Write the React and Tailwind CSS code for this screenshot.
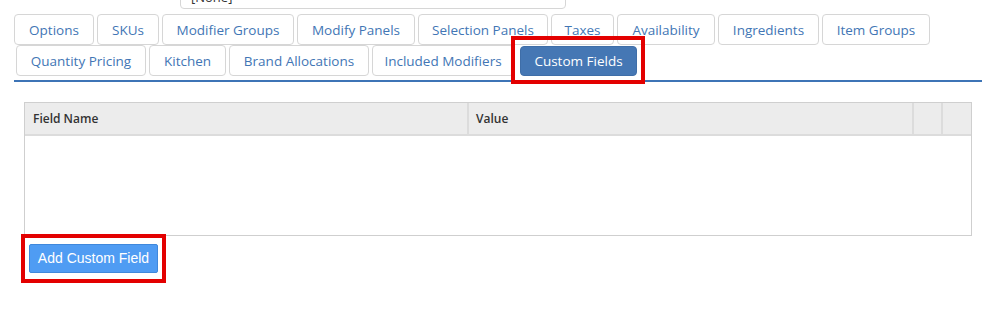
const row1 = [
  { label: 'Options', w: 'w-[80px]' },
  { label: 'SKUs', w: 'w-[62px]' },
  { label: 'Modifier Groups', w: 'w-[132px]' },
  { label: 'Modify Panels', w: 'w-[118px]' },
  { label: 'Selection Panels', w: 'w-[130px]' },
  { label: 'Taxes', w: 'w-[63px]' },
  { label: 'Availability', w: 'w-[98px]' },
  { label: 'Ingredients', w: 'w-[101px]' },
  { label: 'Item Groups', w: 'w-[108px]' },
];

const row2 = [
  { label: 'Quantity Pricing', w: 'w-[130px]' },
  { label: 'Kitchen', w: 'w-[77px]' },
  { label: 'Brand Allocations', w: 'w-[140px]' },
  { label: 'Included Modifiers', w: 'w-[142px]' },
];

const Tab = ({ label, w }) => (
  <div className={`${w} h-[31px] shrink-0 rounded-[4px] border border-[#d6d6d6] bg-white flex items-center justify-center pt-px text-[13.5px] text-[#4276b5]`}>
    {label}
  </div>
);

export default function App() {
  return (
    <div className="w-[994px] h-[310px] bg-white overflow-hidden font-['Open_Sans',sans-serif]">
      {/* cut-off select above */}
      <div className="ml-[180px] w-[386px] h-[9px] overflow-hidden">
        <div className="-mt-[14px] h-[23px] rounded-[4px] border border-[#d6d6d6] pl-[10px] text-[13px] leading-[21px] text-[#333]">[None]</div>
      </div>

      <div className="pl-[14px] pt-[5px]">
        <div className="flex gap-[3px]">
          {row1.map((t) => <Tab key={t.label} {...t} />)}
        </div>
        <div className="flex gap-[3px] ml-[2px] items-start">
          {row2.map((t) => <Tab key={t.label} {...t} />)}
          <div className="relative ml-[3px] mt-px">
            <div className="w-[117px] h-[30px] rounded-[4px] bg-[#4577b4] border border-[#3f6ea8] flex items-center justify-center text-[13.5px] text-white">
              Custom Fields
            </div>
            <div className="absolute z-10 -left-[9px] -top-[10px] w-[134px] h-[48px] border-4 border-[#e30000]" />
          </div>
        </div>
        <div className="mt-[4px] w-[968px] h-[2px] bg-[#3d74b6]" />

        <div className="ml-[10px] mt-[20px] w-[948px] h-[134px] border border-[#cfcfcf]">
          <div className="flex h-[33px] bg-[#ececec] border-b-2 border-[#dcdcdc] text-[12px] font-semibold text-[#333]">
            <div className="w-[444px] border-r-2 border-[#dcdcdc] pl-[8px] flex items-center">Field Name</div>
            <div className="w-[445px] border-r-2 border-[#dcdcdc] pl-[7px] flex items-center">Value</div>
            <div className="w-[29px] border-r-2 border-[#dcdcdc]" />
            <div className="flex-1" />
          </div>
        </div>

        <div className="ml-[7px] mt-[-2px] inline-block border-4 border-[#e30000] px-[4px] py-[6px]">
          <button className="w-[129px] h-[29px] rounded-[2px] bg-[#4f9cf3] border border-[#3f88dc] text-white text-[14px] font-['Liberation_Sans',Arial,sans-serif]">
            Add Custom Field
          </button>
        </div>
      </div>
    </div>
  );
}
